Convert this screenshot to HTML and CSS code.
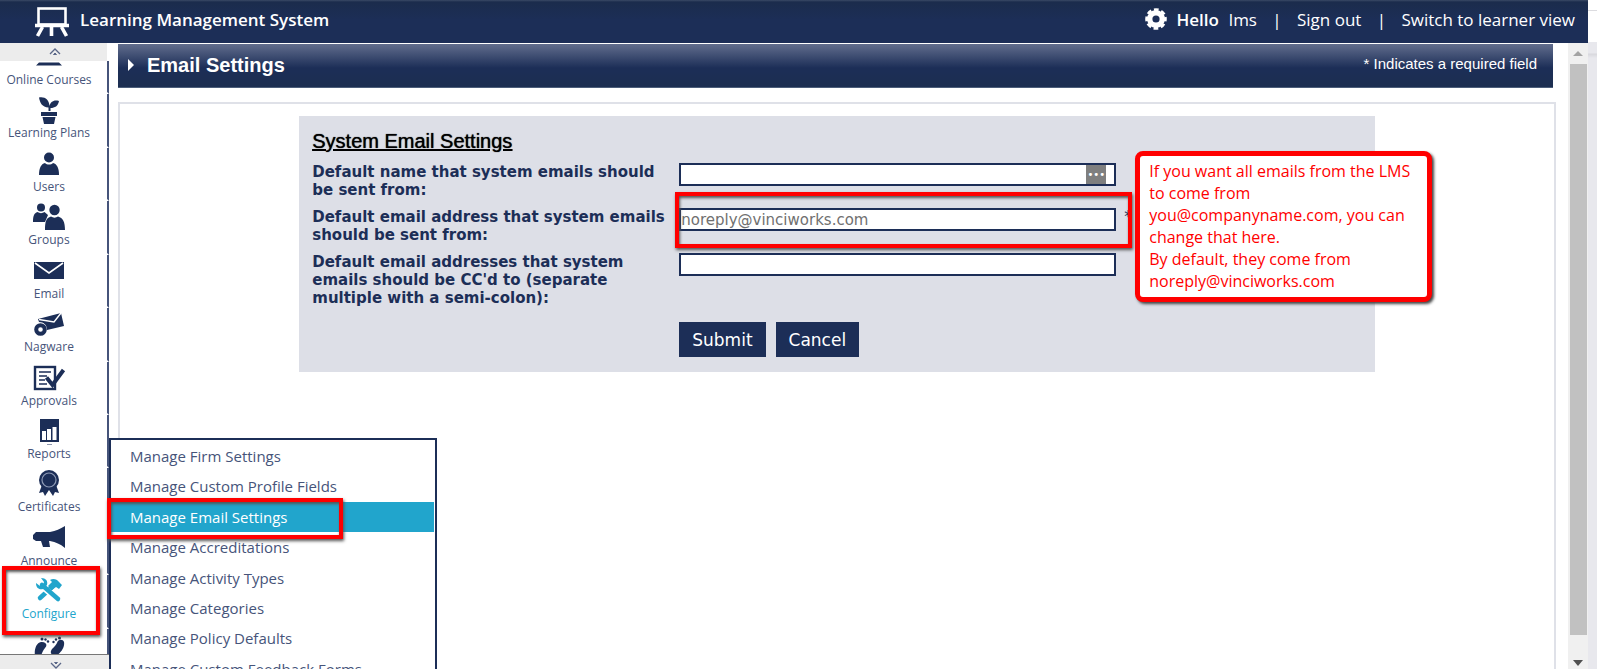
FILE: index.html
```html
<!DOCTYPE html>
<html lang="en">
<head>
    <meta charset="UTF-8">
    <meta name="viewport" content="width=device-width, initial-scale=1.0">
    <title>Learning Management System</title>
    <link rel="stylesheet" href="styles.css">
</head>
<body>
    <div class="app">
        <header class="topbar">
            <svg class="logo" viewBox="0 0 34 30" fill="none" stroke="#fff">
                <rect x="3.5" y="1.5" width="27" height="16" stroke-width="2.6"/>
                <path d="M0 18.5h34" stroke-width="3.6"/>
                <path d="M7.500 20L2.500 29M26.500 20L31.500 29M16.500 20v9" stroke-width="3.6"/>
            </svg>
            <span class="brand">Learning Management System</span>
            <nav class="user-nav">
                <svg class="gear" viewBox="0 0 22 22" fill="none" stroke="#fff">
                    <circle cx="11" cy="11" r="6.3" stroke-width="5.400"/>
                    <circle cx="11" cy="11" r="9.300" stroke-width="3" stroke-dasharray="4.600 2.704" stroke-dashoffset="2.300"/>
                </svg>
                <strong>Hello</strong>
                <span class="username">lms</span>
                <span class="sep">|</span>
                <a href="#">Sign out</a>
                <span class="sep">|</span>
                <a href="#">Switch to learner view</a>
            </nav>
        </header>

        <div class="workspace">
            <aside class="sidebar">
                <button class="scroll-btn scroll-up" aria-label="Scroll up">
                    <svg viewBox="0 0 12 8" fill="none" stroke="#5a6788"><path d="M1 6l5-5 5 5" stroke-width="1.300"/><path d="M4.500 6.500L6 5l1.500 1.500z" fill="#5a6788"/></svg>
                </button>
                <div class="side-clip">
                    <ul class="side-list">
                        <li><a href="#">
                            <svg viewBox="0 0 32 28"><path d="M6 4h20v14H6zM3 22.500l3-3h20l3 3z"/></svg>
                            Online Courses</a></li>
                        <li><a href="#">
                            <svg viewBox="0 0 32 28"><path d="M6 1.500c6-1 10 2 10.500 8.500 1-4 4-6.500 9.500-5-1 5-4 7-8.500 7v3h-2v-3.500C9 11 7 7 6 1.500zM8 16h16v4H8zM9.500 21h13l-1.500 7H11z"/></svg>
                            Learning Plans</a></li>
                        <li><a href="#">
                            <svg viewBox="0 0 32 28"><circle cx="16" cy="7.500" r="5"/><path d="M6 25c0-7 2-11 6-12 2 2 6 2 8 0 4 1 6 5 6 12z"/></svg>
                            Users</a></li>
                        <li><a href="#">
                            <svg viewBox="0 0 32 28"><circle cx="8" cy="4.500" r="4"/><path d="M0 19c0-6 1-9 4.500-10 2 1.500 5 1.500 7 0l3.500 3-3 7z"/><circle cx="21.500" cy="7" r="5.200"/><path d="M12 27c0-8 1-12 6-13.500 2 1.500 5 1.500 7 0C30 15 32 19 32 27z"/></svg>
                            Groups</a></li>
                        <li><a href="#">
                            <svg viewBox="0 0 32 28"><path d="M1 5h30v17H1z"/><path d="M2 6l14 10L30 6" fill="none" stroke="#fff" stroke-width="1.600"/></svg>
                            Email</a></li>
                        <li><a href="#">
                            <svg viewBox="0 0 32 28"><path d="M5 9l23-6 3 13-17 4c0-5-3-8-8-8z"/><path d="M6 9.500l15 2.500 7-9" fill="none" stroke="#fff" stroke-width="1.400"/><circle class="outline" cx="7.500" cy="19.500" r="4.300" stroke-width="4"/></svg>
                            Nagware</a></li>
                        <li><a href="#">
                            <svg class="outline" viewBox="0 0 32 28"><rect x="2" y="3" width="20" height="22" stroke-width="2.400"/><path d="M6 8h12M6 12h8M6 16h6M6 20h8" stroke-width="1.500"/><path d="M13.500 13.500l6 7.500L30.500 6" stroke-width="4"/></svg>
                            Approvals</a></li>
                        <li><a href="#">
                            <svg viewBox="0 0 32 28"><path d="M7 2h19v23H7z"/><path d="M9 14h4v9H9zM14 12h4v11h-4zM19.500 10h4v13h-4z" fill="#fff"/><path d="M14 27.500h5" stroke="#8e97ae"/></svg>
                            Reports</a></li>
                        <li><a href="#">
                            <svg viewBox="0 0 32 28"><path d="M9 15l-3 8 4-1 2 4 4-6 4 6 2-4 4 1-3-8z"/><circle cx="16" cy="10" r="10"/><circle cx="16" cy="10" r="7" fill="none" stroke="#8e9ab5" stroke-width="1.200"/></svg>
                            Certificates</a></li>
                        <li><a href="#">
                            <svg viewBox="0 0 32 28"><path d="M0 11l3-3h14c6-1 10-3 15-6v22c-5-4-9-6-15-7h-1l1 6h-7l-2-6H3l-3-2z"/></svg>
                            Announce</a></li>
                        <li class="active"><a href="#">
                            <svg viewBox="0 0 32 28"><path d="M7 21L19 10" stroke="#21a5cc" stroke-width="4.500" stroke-linecap="round"/><path d="M17 3c3-2 7-1 9 2l3 3-3 4-3-2-4 3-4-4 4-4z"/><path d="M8 8.500L25 23" stroke="#fff" stroke-width="6"/><path d="M9 8L25 22" stroke="#21a5cc" stroke-width="4.500" stroke-linecap="round"/><path d="M8 1c5 0 7 3 6 7l-4 4c-4 1-7-1-7-6l4 3 3-1 1-3z"/></svg>
                            Configure</a>
                            <span class="marker marker-configure"></span></li>
                        <li><a href="#">
                            <svg viewBox="0 0 32 28"><path d="M2 25c-1-6 1-13 6-14 5-.5 7 3 4 6-3 3-3 8-6 9-2 1-4 0-4-1zM18 20c1-3 4-4 6-8 1-4 6-4 7-1 1 5-3 11-7 13-4 1-7-1-6-4z"/><circle cx="9" cy="8" r="1.500"/><circle cx="12.500" cy="8.500" r="1.200"/><circle cx="15" cy="10.500" r="1.200"/><circle cx="26.500" cy="7" r="1.500"/><circle cx="23" cy="8.500" r="1.200"/><circle cx="20.500" cy="11" r="1.200"/></svg>
                            </a></li>
                    </ul>
                </div>
                <button class="scroll-btn scroll-down" aria-label="Scroll down">
                    <svg viewBox="0 0 12 8" fill="none" stroke="#5a6788"><path d="M1 2l5 5 5-5" stroke-width="1.300"/><path d="M4.500 1.500L6 3l1.500-1.500z" fill="#5a6788"/></svg>
                </button>
            </aside>

            <main class="content">
                <div class="page-bar">
                    <h1>Email Settings</h1>
                    <span class="required-note">* Indicates a required field</span>
                </div>

                <div class="page-body">
                    <form class="settings-form">
                        <h2>System Email Settings</h2>
                        <div class="form-row">
                            <label for="fromName">Default name that system emails should be sent from:</label>
                            <div class="field">
                                <input type="text" id="fromName">
                                <span class="fill-badge">•••</span>
                            </div>
                        </div>
                        <div class="form-row">
                            <label for="fromEmail">Default email address that system emails should be sent from:</label>
                            <div class="field">
                                <input type="text" id="fromEmail" value="noreply@vinciworks.com">
                                <span class="star">*</span>
                                <span class="marker marker-field"></span>
                            </div>
                        </div>
                        <div class="form-row">
                            <label for="ccEmails">Default email addresses that system emails should be CC'd to (separate multiple with a semi-colon):</label>
                            <div class="field">
                                <input type="text" id="ccEmails">
                            </div>
                        </div>
                        <div class="actions">
                            <button type="button">Submit</button>
                            <button type="button">Cancel</button>
                        </div>
                        <div class="callout">
                            If you want all emails from the LMS<br>
                            to come from<br>
                            you@companyname.com, you can<br>
                            change that here.<br>
                            By default, they come from<br>
                            noreply@vinciworks.com
                        </div>
                    </form>
                </div>
            </main>

            <div class="scrollbar">
                <svg viewBox="0 0 20 20"><path d="M5 13l5-5 5 5z" fill="#a3a3a3"/></svg>
                <div class="thumb"></div>
                <svg viewBox="0 0 20 20"><path d="M5 11h10l-5 6z" fill="#505050"/></svg>
            </div>

            <ul class="submenu">
                <li><a href="#">Manage Firm Settings</a></li>
                <li><a href="#">Manage Custom Profile Fields</a></li>
                <li class="selected"><a href="#">Manage Email Settings</a><span class="marker marker-menu"></span></li>
                <li><a href="#">Manage Accreditations</a></li>
                <li><a href="#">Manage Activity Types</a></li>
                <li><a href="#">Manage Categories</a></li>
                <li><a href="#">Manage Policy Defaults</a></li>
                <li><a href="#">Manage Custom Feedback Forms</a></li>
            </ul>
        </div>
    </div>
    <div class="edge"></div>
</body>
</html>
```
FILE: styles.css
```css
* {
    box-sizing: border-box;
}

body {
    margin: 0;
    height: 100vh;
    display: flex;
    overflow: hidden;
    background: #fff;
    color: #1c2e57;
    font-family: "Open Sans", "Noto Sans", sans-serif;
}

a {
    color: inherit;
    text-decoration: none;
}

ul {
    list-style: none;
    margin: 0;
    padding: 0;
}

.app {
    flex: 1;
    min-width: 0;
    display: flex;
    flex-direction: column;
}

/* strip of the window behind the app */
.edge {
    width: 9px;
    background: linear-gradient(#fff 10px, #dcdce0 10px, #dcdce0 11px, #fff 11px, #fff 42px, #e8e8ed 42px, #e8e8ed 53px, #d8d8dd 54px, #e8e8ed 58px);
}

/* top bar */
.topbar {
    height: 43px;
    display: flex;
    align-items: center;
    padding: 0 13px 5px 35px;
    background: linear-gradient(#3a4a66 0, #1b2c4c 2px, #1c2e57 20px);
    color: #fff;
    font-size: 17px;
}

.logo {
    width: 34px;
    height: 30px;
    margin: 5px 11px 0 0;
}

.brand {
    font-weight: 600;
}

.user-nav {
    margin-left: auto;
    display: flex;
    align-items: center;
}

.gear {
    width: 22px;
    height: 22px;
    margin-right: 9px;
}

.user-nav strong {
    font-weight: 600;
}

.username {
    margin-left: 10px;
}

.sep {
    width: 40px;
    text-align: center;
}

.workspace {
    flex: 1;
    min-height: 0;
    display: flex;
    position: relative;
    overflow: hidden;
}

/* sidebar */
.sidebar {
    width: 109px;
    display: flex;
    flex-direction: column;
}

.scroll-btn {
    width: 107px;
    padding: 0 0 0 2px;
    border: none;
    background: #ececec;
    display: flex;
    align-items: center;
    justify-content: center;
}

.scroll-btn svg {
    width: 12px;
    height: 8px;
}

.scroll-up {
    height: 18px;
}

.scroll-down {
    height: 15px;
    width: 109px;
    border-top: 1px solid #777;
    align-items: flex-end;
}

.side-clip {
    flex: 1;
    min-height: 0;
    overflow: hidden;
}

.side-list {
    height: calc(100% + 48px);
    margin-top: -20px;
    display: flex;
    flex-direction: column;
}

.side-list li {
    flex: 1;
    min-height: 0;
    position: relative;
    border-right: 2px solid #46547a;
    border-bottom: 2px solid #fff;
}

.side-list a {
    display: flex;
    flex-direction: column;
    align-items: center;
    padding: 2px 9px 0 0;
    font-size: 12px;
    line-height: 18px;
    white-space: nowrap;
    color: #46547a;
}

.side-list svg {
    width: 32px;
    height: 28px;
    fill: #1c2e57;
    overflow: visible;
}

.side-list .outline {
    fill: none;
    stroke: #1c2e57;
}

.side-list .active a {
    color: #21a5cc;
}

.side-list .active svg {
    fill: #21a5cc;
}

/* red boxes */
.marker {
    position: absolute;
    border: 4px solid #f00;
    box-shadow: 1px 2px 3px #555, inset 1px 2px 3px #555;
    pointer-events: none;
}

.marker-configure {
    left: 2px;
    top: -9px;
    width: 98px;
    height: 69px;
    z-index: 2;
}

.marker-menu {
    left: -4px;
    top: -4px;
    width: 236px;
    height: 41px;
}

.marker-field {
    left: -4px;
    top: -16px;
    width: 457px;
    height: 56px;
}

/* main area */
.content {
    flex: 1;
    min-width: 0;
    margin: 1px 12px 0 9px;
    display: flex;
    flex-direction: column;
}

.page-bar {
    height: 44px;
    margin-right: 3px;
    padding: 0 16px 1px 10px;
    display: flex;
    align-items: center;
    justify-content: space-between;
    background: linear-gradient(#616d8d, #1c2e57 24px, #1c2e50);
    border-bottom: 1px solid #4c5e7a;
    color: #fff;
    font-family: "Liberation Sans", Arial, sans-serif;
}

.page-bar h1 {
    margin: 0;
    font-size: 20px;
    display: flex;
    align-items: center;
}

.page-bar h1::before {
    content: "";
    margin-right: 13px;
    border: 6px solid transparent;
    border-left-color: #fff;
    border-right: none;
}

.required-note {
    padding-bottom: 3px;
    font-size: 15px;
}

.page-body {
    flex: 1;
    margin-top: 14px;
    padding-top: 12px;
    border: 2px solid #dfe1e8;
    border-bottom: none;
}

.settings-form {
    width: 75%;
    margin: 0 auto;
    padding: 13px 13px 15px;
    position: relative;
    background: #dddfe7;
    font-family: "DejaVu Sans", Verdana, sans-serif;
    font-size: 15px;
}

.settings-form h2 {
    margin: 0 0 9px;
    font-family: "Liberation Sans", Arial, sans-serif;
    font-size: 20px;
    font-weight: normal;
    line-height: 25px;
    text-decoration: underline;
    text-shadow: 0 0 1px #000;
    color: #000;
}

.form-row {
    display: flex;
    margin-bottom: 9px;
}

.form-row label {
    width: 367px;
    padding-right: 10px;
    font-weight: bold;
    font-size: 15px;
    line-height: 18px;
}

.field {
    position: relative;
}

.field input {
    display: block;
    width: 437px;
    height: 23px;
    padding: 0;
    border: 2px solid #1c2e57;
    background: #fff;
    color: #707070;
    font-family: inherit;
    font-size: 15px;
}

.fill-badge {
    position: absolute;
    right: 10px;
    top: 2px;
    width: 20px;
    height: 19px;
    background: #7f7f7f;
    color: #fff;
    font-size: 10px;
    line-height: 19px;
    text-align: center;
}

.star {
    position: absolute;
    left: 445px;
    top: 0;
}

.actions {
    display: flex;
    gap: 10px;
    margin: 15px 0 0 367px;
}

.actions button {
    height: 35px;
    padding: 0 13px;
    border: none;
    background: #1c2e57;
    color: #fff;
    font-family: inherit;
    font-size: 17px;
}

.callout {
    position: absolute;
    left: 836px;
    top: 35px;
    width: 297px;
    padding: 4px 9px 5px;
    border: 5px solid #f00;
    border-radius: 8px;
    box-shadow: 2px 2px 3px #444;
    background: #fff;
    color: #f00;
    font-family: "Open Sans", "Noto Sans", sans-serif;
    font-size: 16px;
    line-height: 22px;
    white-space: nowrap;
}

/* window scrollbar */
.scrollbar {
    width: 20px;
    display: flex;
    flex-direction: column;
    background: #f0f0f0;
}

.scrollbar svg {
    width: 20px;
    height: 20px;
}

.scrollbar .thumb {
    flex: 1;
    margin: 1px 1px 14px 2px;
    background: #c1c1c1;
}

/* fly-out menu */
.submenu {
    position: absolute;
    left: 109px;
    top: 395px;
    width: 328px;
    height: 248px;
    display: flex;
    flex-direction: column;
    padding: 1px 1px 0 0;
    border: 2px solid #1c2e57;
    background: #fff;
}

.submenu li {
    flex: 1;
    min-height: 0;
    position: relative;
}

.submenu a {
    display: block;
    padding-left: 19px;
    font-size: 15px;
    line-height: 30px;
    color: #46547a;
}

.submenu .selected a {
    background: #21a5cc;
    color: #fff;
}
```
